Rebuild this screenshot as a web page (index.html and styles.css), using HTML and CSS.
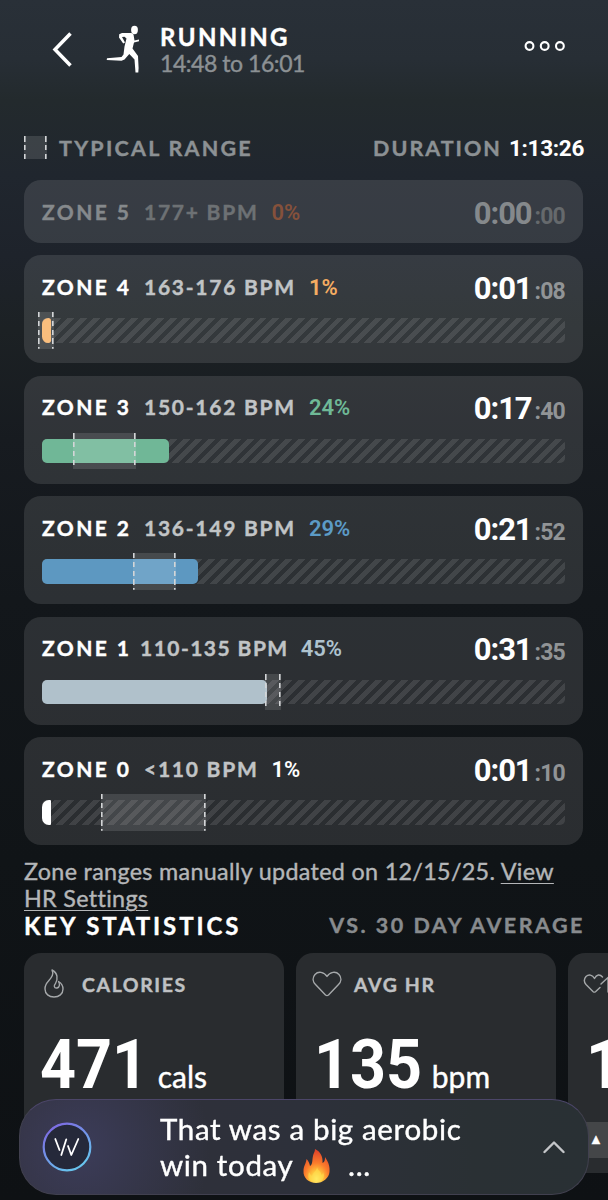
FILE: index.html
```html
<!doctype html>
<html lang="en">
    <head>
        <meta charset="UTF-8" />
        <meta name="viewport" content="width=device-width, initial-scale=1.0" />
        <title>Running</title>
        <link rel="stylesheet" href="styles.css">
    </head>
    <body>
        <div class="screen">
            <header class="header">
                <svg class="back" width="22" height="38" viewBox="0 0 22 38">
                    <path d="M19.5 2.5 4 18.5 19.5 34.500" />
                </svg>
                <svg class="runner" width="36" height="48" viewBox="0 0 36 48">
                    <ellipse cx="28.500" cy="5" rx="3.400" ry="4.200" />
                    <path d="M25.500 8 16 8 13.200 9.200 13 12.500 17.200 18.500 19 17.500 16 12 18.500 11.700 20.500 13.500 18.500 21.500 17.500 29.500 15.500 32 1 33.200 0.700 35 15.500 35.800 18.500 34.500 23.300 29 28.500 34.500 29.500 47.500 32.300 47.500 32.600 43 32 31 26.500 23.500 28 17.500 33 16.200 33 14.500 28.500 15.500 27.500 9.500Z" />
                </svg>
                <div class="title">
                    <h1>RUNNING</h1>
                    <p>14:48 to 16:01</p>
                </div>
                <svg class="more" width="42" height="12" viewBox="0 0 42 12">
                    <circle cx="5.500" cy="6" r="3.900" />
                    <circle cx="20.700" cy="6" r="3.900" />
                    <circle cx="35.900" cy="6" r="3.900" />
                </svg>
            </header>

            <div class="legend">
                <span class="legend-swatch"></span>
                <span class="legend-label">TYPICAL RANGE</span>
                <span class="duration">DURATION</span>
                <span class="duration-value">1:13:26</span>
            </div>

            <section class="zones">
                <div class="zone zone-5 empty">
                    <div class="zone-info">
                        <span class="name">ZONE 5</span>
                        <span class="bpm">177+ BPM</span>
                        <span class="percent">0%</span>
                        <span class="time">0:00<small>:00</small></span>
                    </div>
                </div>
                <div class="zone zone-4">
                    <div class="zone-info">
                        <span class="name">ZONE 4</span>
                        <span class="bpm">163-176 BPM</span>
                        <span class="percent">1%</span>
                        <span class="time">0:01<small>:08</small></span>
                    </div>
                    <div class="bar">
                        <div class="fill" style="width: 8.500px"></div>
                        <div class="range" style="left: -4px; width: 15.500px"></div>
                    </div>
                </div>
                <div class="zone zone-3">
                    <div class="zone-info">
                        <span class="name">ZONE 3</span>
                        <span class="bpm">150-162 BPM</span>
                        <span class="percent">24%</span>
                        <span class="time">0:17<small>:40</small></span>
                    </div>
                    <div class="bar">
                        <div class="fill" style="width: 126.500px"></div>
                        <div class="range" style="left: 31px; width: 63px"></div>
                    </div>
                </div>
                <div class="zone zone-2">
                    <div class="zone-info">
                        <span class="name">ZONE 2</span>
                        <span class="bpm">136-149 BPM</span>
                        <span class="percent">29%</span>
                        <span class="time">0:21<small>:52</small></span>
                    </div>
                    <div class="bar">
                        <div class="fill" style="width: 156px"></div>
                        <div class="range" style="left: 91px; width: 43px"></div>
                    </div>
                </div>
                <div class="zone zone-1">
                    <div class="zone-info">
                        <span class="name">ZONE 1</span>
                        <span class="bpm">110-135 BPM</span>
                        <span class="percent">45%</span>
                        <span class="time">0:31<small>:35</small></span>
                    </div>
                    <div class="bar">
                        <div class="fill" style="width: 225px"></div>
                        <div class="range" style="left: 223px; width: 16px"></div>
                    </div>
                </div>
                <div class="zone zone-0">
                    <div class="zone-info">
                        <span class="name">ZONE 0</span>
                        <span class="bpm">&lt;110 BPM</span>
                        <span class="percent">1%</span>
                        <span class="time">0:01<small>:10</small></span>
                    </div>
                    <div class="bar">
                        <div class="fill" style="width: 8.500px"></div>
                        <div class="range" style="left: 59px; width: 105px"></div>
                    </div>
                </div>
            </section>

            <p class="note">
                Zone ranges manually updated on 12/15/25. <a href="#">View<br>HR Settings</a>
            </p>

            <div class="stats-header">
                <h2>KEY STATISTICS</h2>
                <span>VS. 30 DAY AVERAGE</span>
            </div>

            <section class="stats">
                <div class="stat">
                    <div class="stat-label">
                        <svg width="24" height="30" viewBox="0 0 24 30">
                            <path d="M10 1C12 5 10 8 6.500 12 3.500 15 3 17 3 20 3 25 7 28 12 28 17 28 21 25 21 20 21 17 20 14.500 16.500 12.500 18 15 18 18 15 19 12 19.500 11.500 16.500 13.500 14.500 16 10 16 4 10 1Z" />
                        </svg>
                        CALORIES
                    </div>
                    <div class="stat-value"><b>471</b><small>cals</small></div>
                    <div class="stat-average"></div>
                </div>
                <div class="stat stat-hr">
                    <div class="stat-label">
                        <svg width="30" height="26" viewBox="0 0 30 26">
                            <path d="M15 5.500C12 .5 6 .2 3 3.500 0 7 1 11 3.500 13.500L13.500 24Q15 25.200 16.500 24L26.500 13.500C29 11 30 7 27 3.500 24 .2 18 .5 15 5.500Z" />
                        </svg>
                        AVG HR
                    </div>
                    <div class="stat-value"><b>135</b><small>bpm</small></div>
                    <div class="stat-average"></div>
                </div>
                <div class="stat stat-max">
                    <div class="stat-label">
                        <svg width="32" height="22" viewBox="0 0 32 22">
                            <path d="M17 14.500 12.500 18.700Q11.300 19.600 10.200 18.700L3 11.500C1 9 .8 6 3 3.500 5.500 1.200 9.500 1.500 11.500 5.500 13.500 1.200 17 1 19.500 4M18 11 25 4.500V19" />
                        </svg>
                    </div>
                    <div class="stat-value"><b>1</b></div>
                    <div class="stat-average">▲</div>
                </div>
            </section>
        </div>

        <div class="coach">
            <svg class="coach-logo" width="50" height="50" viewBox="0 0 50 50">
                <defs>
                    <linearGradient id="ring" x1="0" y1="0" x2="0.6" y2="1">
                        <stop offset="0" stop-color="#8060e0" />
                        <stop offset="0.5" stop-color="#7390e8" />
                        <stop offset="1" stop-color="#68c4ee" />
                    </linearGradient>
                </defs>
                <circle cx="25" cy="25" r="23.300" />
                <path d="M13.300 17 17.500 28M19.300 33 24.300 17.300M26 24 29.300 33 36.300 17" />
            </svg>
            <p>
                That was a big aerobic<br>win today
                <svg class="fire" width="27" height="34" viewBox="0 0 27 34">
                    <defs>
                        <radialGradient id="flame" cx="0.5" cy="0.88" r="0.85">
                            <stop offset="0" stop-color="#fff27a" />
                            <stop offset="0.28" stop-color="#ffc13b" />
                            <stop offset="0.55" stop-color="#fb7d2c" />
                            <stop offset="1" stop-color="#df4129" />
                        </radialGradient>
                    </defs>
                    <path fill="url(#flame)" d="M12 0C18 3 20 8 19.500 14 22 13 22 10 22 8 26 14 27 18 26.500 23 26 29 20 34 13 34 6 34 0 29 .5 22 .5 17 3 15 3.500 10 5.500 12 6.500 14 7 17 10 15 9 11 10 7 10.500 4 12 3 12 0Z" />
                    <path fill="#ffe14f" opacity="0.55" d="M14 18C15 22 18 22 18.500 26 20 25 20 24 20 23 23 29 19 33 13 33 6 33 4 29 6 23 7 25 8 26 9 27 10 23 14 22 14 18Z" />
                </svg>
                <span class="dots">...</span>
            </p>
            <svg class="chevron" width="22" height="14" viewBox="0 0 22 14">
                <path d="M1.500 12 11 2.500 20.500 12" />
            </svg>
        </div>
    </body>
</html>
```
FILE: styles.css
```css
* {
    margin: 0;
    padding: 0;
    box-sizing: border-box;
}

body {
    font-family: Lato, "Open Sans", sans-serif;
    font-variant-ligatures: none;
    background: #101417;
    color: white;
    -webkit-text-stroke: 0.4px;
}

.screen {
    height: 1200px;
    padding: 0 24px;
    overflow: hidden;
    background: linear-gradient(
        #293038 0,
        #272e35 60px,
        #232a2d 100px,
        #20262e 175px,
        #1e232b 255px,
        #1c2124 330px,
        #171b20 440px,
        #13171b 600px,
        #101417 860px,
        #0e1114 1200px
    );
}

svg {
    fill: none;
    stroke-linecap: round;
    stroke-linejoin: round;
    flex: none;
}

.header {
    display: flex;
    align-items: flex-start;
    height: 134px;
    padding: 25px 18px 0 27px;
}

.back {
    margin-top: 6px;
    stroke: white;
    stroke-width: 3.5;
    stroke-linecap: butt;
    stroke-linejoin: miter;
}

.runner {
    margin-left: 33px;
    fill: white;
}

.title {
    margin: -1px 0 0 18px;
}

.title h1 {
    font-size: 24px;
    line-height: 25px;
    letter-spacing: 2.4px;
}

.title p {
    margin-top: 1px;
    font-size: 23px;
    line-height: 27px;
    letter-spacing: -0.45px;
    color: #8c9194;
}

.more {
    margin: 15px 0 0 auto;
    stroke: white;
    stroke-width: 2.1;
}

.legend {
    display: flex;
    align-items: center;
    height: 27px;
    font-size: 21.5px;
    font-weight: 700;
    letter-spacing: 2.25px;
    color: #8c9194;
}

.legend-swatch,
.range {
    background:
        repeating-linear-gradient(#d3d5d7 0 5.6px, transparent 5.6px 8.9px) left / 1.6px 100% no-repeat,
        repeating-linear-gradient(#d3d5d7 0 5.6px, transparent 5.6px 8.9px) right / 1.6px 100% no-repeat,
        rgba(255, 255, 255, 0.12);
}

.legend-swatch {
    width: 23px;
    height: 23px;
    margin-right: 12px;
}

.duration {
    margin-left: auto;
    letter-spacing: 2px;
}

.duration-value {
    margin-left: 7px;
    font-family: Roboto, sans-serif;
    font-size: 22.5px;
    letter-spacing: -0.3px;
    color: white;
    -webkit-text-stroke: 0;
}

.zones {
    display: flex;
    flex-direction: column;
    gap: 12.3px;
    margin-top: 19px;
    margin-right: 1px;
}

.zone {
    height: 108.2px;
    padding: 15px 18px;
    border-radius: 17px;
    background: rgba(255, 255, 255, 0.11);
}

.zone-info {
    display: flex;
    align-items: center;
    height: 32px;
    font-size: 21px;
    font-weight: 700;
    letter-spacing: 1.75px;
}

.name {
    width: 102px;
    letter-spacing: 2.4px;
}

.zone-1 .name {
    width: 98px;
}

.bpm {
    margin-right: 13px;
    color: #c1c4c6;
}

.zone-1 .bpm {
    margin-right: 12px;
    letter-spacing: 1.45px;
}

.percent {
    padding-top: 2px;
    font-family: Roboto, sans-serif;
    font-size: 22px;
    font-weight: 600;
    letter-spacing: 0;
    -webkit-text-stroke: 0;
}

.time {
    margin-left: auto;
    padding-top: 4px;
    font-family: Roboto, sans-serif;
    font-size: 31px;
    letter-spacing: -1.1px;
    -webkit-text-stroke: 0;
}

.time small {
    margin-left: 3px;
    font-size: 23px;
    letter-spacing: -0.8px;
    color: #919496;
}

.empty {
    height: 63px;
}

.empty .name,
.empty .time {
    color: #85898c;
}

.empty .bpm {
    color: #6d7174;
}

.empty .time small {
    color: #65696c;
}

.bar {
    position: relative;
    height: 24.5px;
    margin-top: 16px;
    border-radius: 5px;
    background: repeating-linear-gradient(135deg, rgba(255, 255, 255, 0.1) 0 4.9px, transparent 4.9px 9.07px);
}

.fill {
    height: 100%;
    border-radius: 5px;
}

.range {
    position: absolute;
    top: -6px;
    bottom: -6px;
}

.zone-5 .percent {
    color: #85513b;
}

.zone-4 .percent {
    color: #f5ad62;
}

.zone-4 .fill {
    border-radius: 7px 3px 3px 7px;
    background: #f9b56c;
}

.zone-3 .percent {
    color: #6fb997;
}

.zone-3 .fill {
    background: #70b797;
}

.zone-2 .percent {
    color: #5c9bc6;
}

.zone-2 .fill {
    background: #5d98c1;
}

.zone-1 .percent {
    color: #afc3cf;
}

.zone-1 .fill {
    background: #b0c1cb;
}

.zone-0 .fill {
    border-radius: 7px 1px 1px 7px;
    background: white;
}

.note {
    margin-top: 13px;
    font-size: 23.3px;
    line-height: 26.5px;
    letter-spacing: 0.33px;
    color: #b4b6b8;
    white-space: nowrap;
}

.note a {
    color: inherit;
    text-decoration-thickness: 1px;
    text-underline-offset: 3px;
}

.stats-header {
    display: flex;
    justify-content: space-between;
    align-items: center;
    height: 28px;
    font-size: 21.5px;
    font-weight: 700;
    letter-spacing: 2.5px;
    color: #888b8e;
}

.stats-header span {
    margin-right: -1px;
}

.stats-header h2 {
    font-size: 24px;
    letter-spacing: 2.9px;
    color: white;
}

.stats {
    display: flex;
    gap: 12px;
    margin-top: 14px;
}

.stat {
    flex: none;
    width: 260px;
    height: 220px;
    border-radius: 17px;
    background: #292c2f;
    overflow: hidden;
}

.stat-label {
    display: flex;
    align-items: center;
    gap: 16px;
    height: 62px;
    padding-left: 18px;
    font-size: 19.5px;
    font-weight: 700;
    letter-spacing: 1.6px;
    color: #bfc1c3;
}

.stat-label svg {
    stroke: #a5a8aa;
    stroke-width: 1.4;
}

.stat-hr .stat-label {
    gap: 12px;
    padding-left: 16px;
}

.stat-max .stat-label {
    padding-left: 15px;
}

.stat-value {
    display: flex;
    align-items: baseline;
    height: 107px;
    padding-left: 16px;
    line-height: 100px;
}

.stat-value b {
    font-family: Roboto, sans-serif;
    font-size: 69px;
    transform: scaleX(0.91);
    transform-origin: left;
    -webkit-text-stroke: 0;
}

.stat-hr .stat-value {
    padding-left: 18px;
}

.stat-max .stat-value {
    padding-left: 18px;
}

.stat-value small {
    margin-left: -1px;
    font-size: 30px;
}

.stat-average {
    height: 36px;
    padding-left: 21px;
    font-size: 14px;
    line-height: 34px;
    background: #444648;
}

.coach {
    position: fixed;
    top: 1099px;
    left: 19px;
    display: flex;
    width: 570px;
    height: 96px;
    padding: 11px 23px 0 22px;
    border: 1px solid #41404f;
    border-top-color: #4c4669;
    border-radius: 37px;
    background:
        radial-gradient(circle at 60px 48px, rgba(72, 72, 120, 0.5), transparent 130px),
        linear-gradient(90deg, #30303a, #2d303a 50%, #2a3034 80%, #293034);
}

.coach-logo {
    margin-top: 11px;
    stroke: white;
    stroke-width: 1.8;
}

.coach-logo circle {
    fill: #25293a;
    stroke: url(#ring);
    stroke-width: 2.2;
}

.coach p {
    margin-left: 68px;
    font-size: 29.5px;
    line-height: 36px;
    letter-spacing: 0.65px;
    white-space: nowrap;
}

.fire {
    margin-left: 2px;
    vertical-align: -7px;
}

.dots {
    margin-left: 10px;
}

.chevron {
    margin: 29px 0 0 auto;
    stroke: #c4c6c9;
    stroke-width: 2.4;
}
```
